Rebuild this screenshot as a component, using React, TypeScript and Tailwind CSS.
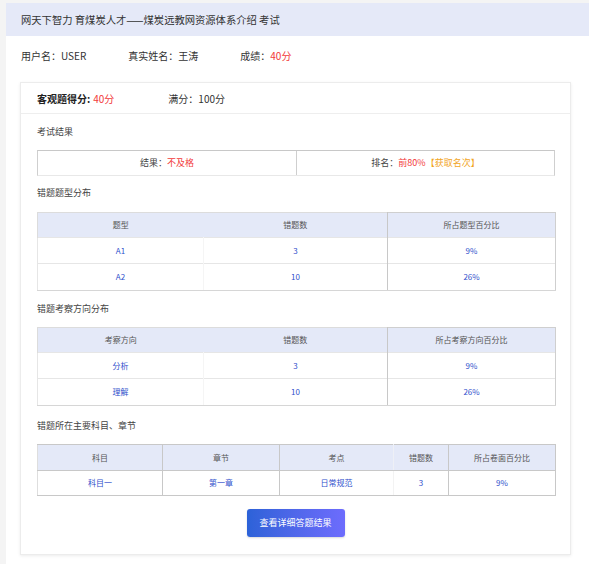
import React from "react";

const font = { fontFamily: '"Noto Sans CJK SC", "Noto Sans", sans-serif' };

function Label({ children, className }: { children: React.ReactNode; className: string }) {
  return <div className={`h-[12px] leading-[12px] text-[9px] text-[#444] ${className}`}>{children}</div>;
}

function DistTable({ head, rows }: { head: string[]; rows: string[][] }) {
  return (
    <table className="w-[518px] border-collapse table-fixed text-[8px]">
      <colgroup>
        <col className="w-[166px]" />
        <col className="w-[184px]" />
        <col className="w-[168px]" />
      </colgroup>
      <thead>
        <tr className="h-[25px] bg-[#e4e9f8] text-[#555]">
          <th className="font-normal border-t border-l border-[#dcdcdc]">{head[0]}</th>
          <th className="font-normal border-t border-r border-t-[#dcdcdc] border-r-[#c8c8c8]">{head[1]}</th>
          <th className="font-normal border-t border-r border-[#cfcfcf]">{head[2]}</th>
        </tr>
      </thead>
      <tbody>
        {rows.map((r, i) => (
          <tr key={i} className={`${i === rows.length - 1 ? "h-[27px]" : "h-[26px]"} text-[#2f50cc]`}>
            <td className={`text-center border-l border-t border-r border-l-[#e6e6e6] border-t-[#e6e6e6] border-r-[#f5f5f5] ${i === rows.length - 1 ? "border-b border-b-[#d6d6d6]" : ""}`}>{r[0]}</td>
            <td className={`text-center border-t border-r border-t-[#e6e6e6] border-r-[#c8c8c8] ${i === rows.length - 1 ? "border-b border-b-[#d6d6d6]" : ""}`}>{r[1]}</td>
            <td className={`text-center border-t border-r border-t-[#e6e6e6] border-r-[#cfcfcf] ${i === rows.length - 1 ? "border-b border-b-[#d6d6d6]" : ""}`}>{r[2]}</td>
          </tr>
        ))}
      </tbody>
    </table>
  );
}

export default function App() {
  return (
    <div style={font} className="min-h-[564px] bg-[#f4f4f4] pt-[3px] pl-[6px]">
      <div className="bg-white min-h-[561px]">
        <div className="h-[33px] bg-[#e5e9f8] flex items-center pl-[15px] text-[10.3px] text-[#333]">
          网天下智力 育煤炭人才——煤炭远教网资源体系介绍 考试
        </div>
        <div className="h-[38px] flex items-center pl-[15px] gap-[42px] text-[10px] text-[#333]">
          <span>用户名：USER</span>
          <span>真实姓名：王涛</span>
          <span>
            成绩：<span className="text-[#f23a3a]">40分</span>
          </span>
        </div>
        <div className="mt-[8px] ml-[14px] mr-[18px] border border-[#ececec] shadow-[0_1px_3px_rgba(0,0,0,0.08)] bg-white">
          <div className="h-[31px] flex items-center pl-[16px] border-b border-[#eeeeee] text-[10px] text-[#333]">
            <span className="font-bold text-[#222]">客观题得分:</span>
            <span className="ml-[3px] text-[#f23a3a]">40分</span>
            <span className="ml-[54px]">满分：100分</span>
          </div>
          <div className="px-[16px] pt-[12px] pb-[17px]">
            <Label className="">考试结果</Label>
            <div className="mt-[12px] w-[518px] h-[26px] flex border border-t-[#c8c8c8] border-x-[#cfcfcf] border-b-[#e8e8e8] text-[9px] text-[#444]">
              <div className="w-[259px] flex items-center justify-center border-r border-[#cfcfcf]">
                结果：<span className="text-[#f23a3a]">不及格</span>
              </div>
              <div className="flex-1 flex items-center justify-center">
                排名：<span className="text-[#f23a3a]">前80%</span>
                <span className="text-[#f2a61f]">【获取名次】</span>
              </div>
            </div>

            <Label className="mt-[11px]">错题题型分布</Label>
            <div className="mt-[13px]">
              <DistTable
                head={["题型", "错题数", "所占题型百分比"]}
                rows={[
                  ["A1", "3", "9%"],
                  ["A2", "10", "26%"],
                ]}
              />
            </div>

            <Label className="mt-[12px]">错题考察方向分布</Label>
            <div className="mt-[12px]">
              <DistTable
                head={["考察方向", "错题数", "所占考察方向百分比"]}
                rows={[
                  ["分析", "3", "9%"],
                  ["理解", "10", "26%"],
                ]}
              />
            </div>

            <Label className="mt-[14px]">错题所在主要科目、章节</Label>
            <table className="mt-[12px] w-[518px] border-collapse table-fixed text-[8px]">
              <colgroup>
                <col className="w-[125px]" />
                <col className="w-[117px]" />
                <col className="w-[114px]" />
                <col className="w-[55px]" />
                <col className="w-[107px]" />
              </colgroup>
              <thead>
                <tr className="h-[26px] bg-[#e4e9f8] text-[#555]">
                  <th className="font-normal border border-[#c8c8c8] border-l-[#dedede]">科目</th>
                  <th className="font-normal border border-[#c8c8c8]">章节</th>
                  <th className="font-normal border-t border-b border-[#c8c8c8] border-r border-r-[#eef0f6]">考点</th>
                  <th className="font-normal border border-[#c8c8c8] border-l-[#eef0f6]">错题数</th>
                  <th className="font-normal border border-[#c8c8c8]">所占卷面百分比</th>
                </tr>
              </thead>
              <tbody>
                <tr className="h-[25px] text-[#2f50cc]">
                  <td className="text-center border border-[#c8c8c8] border-l-[#dedede]">科目一</td>
                  <td className="text-center border border-[#c8c8c8]">第一章</td>
                  <td className="text-center border-b border-[#c8c8c8] border-r border-r-[#f3f3f3]">日常规范</td>
                  <td className="text-center border-b border-r border-[#c8c8c8]">3</td>
                  <td className="text-center border border-[#c8c8c8]">9%</td>
                </tr>
              </tbody>
            </table>

            <div className="mt-[13px] flex justify-center">
              <button className="w-[98px] h-[28px] rounded-[3px] bg-linear-to-r from-[#2c62d8] to-[#6d6cfd] text-white text-[9px] shadow-[0_1px_2px_rgba(0,0,0,0.15)]">
                查看详细答题结果
              </button>
            </div>
          </div>
        </div>
      </div>
    </div>
  );
}
